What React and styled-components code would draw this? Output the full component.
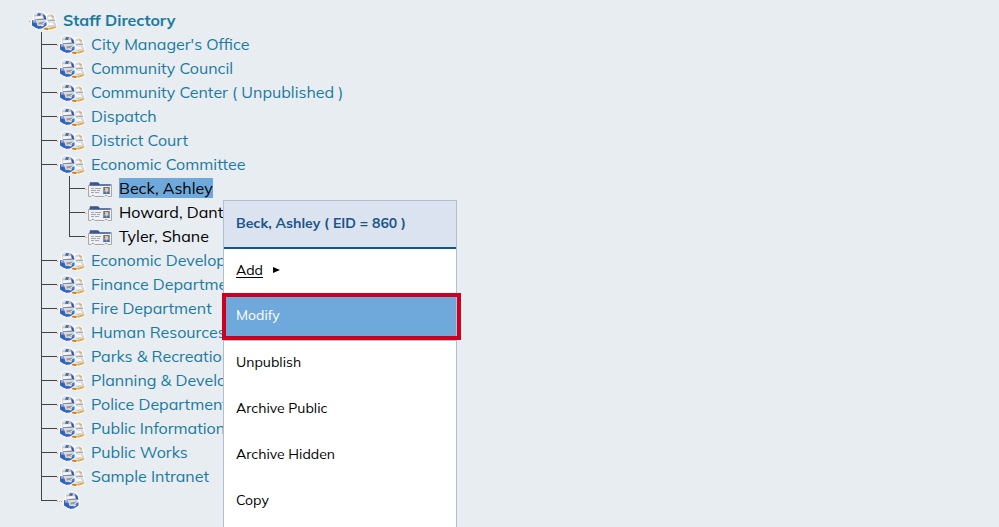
import React, { useState } from 'react'
import styled, { createGlobalStyle } from 'styled-components'

const departments = [
    { name: "City Manager's Office" },
    { name: "Community Council" },
    { name: "Community Center ( Unpublished )" },
    { name: "Dispatch" },
    { name: "District Court" },
    { name: "Economic Committee", staff: ["Beck, Ashley", "Howard, Dante", "Tyler, Shane"] },
    { name: "Economic Development" },
    { name: "Finance Department" },
    { name: "Fire Department" },
    { name: "Human Resources" },
    { name: "Parks & Recreation" },
    { name: "Planning & Development" },
    { name: "Police Department" },
    { name: "Public Information" },
    { name: "Public Works" },
    { name: "Sample Intranet" },
]

const actions = ["Unpublish", "Archive Public", "Archive Hidden", "Copy"]

const BluePerson = () => (
    <g>
        <path d="M4 5 L7 3 L15 4 L18 7 L18.5 12 L19 18 L13 21.5 L8 21.5 L2.5 18 L2 12 L4 10 Z" fill="#fbfcfd" />
        <path d="M5 6 L7 4 L14 5 L16.5 7.5 L16 12 L5.5 12 Z" fill="#bfc4cb" />
        <path d="M6 4.5 L10 4 L9 6 L5.5 7 Z" fill="#e8eaed" />
        <path d="M9 5 L12 5.5 L11 8 L8 7.5 Z" fill="#4569ad" />
        <path d="M14 6 L16.5 8 L17.5 12 L15 11 Z" fill="#2a55b0" />
        <path d="M5.5 8.5 L13.5 8 L14.5 10.5 L6 11 Z" fill="#f6f6f6" />
        <path d="M6 12 L15.5 11" stroke="#7c8693" />
        <path d="M3 12 L7 13 L8 16 L9.5 20.5 L7 20 L3 17.5 Z" fill="#2f62b9" />
        <path d="M3.5 12 L6.5 13 L7 15 L4 14.5 Z" fill="#8fabd9" />
        <path d="M8 17.5 L11 18 L17.5 14 L17.5 17.5 L13 20.5 L9 21 Z" fill="#3768ba" />
        <path d="M7 12.5 L16.5 12 L17 14 L13 16 L13 18 L9 18 Z" fill="#d3d7dc" />
        <path d="M10 14.5 L16 13.5 L13 16 L9 16.5 Z" fill="#9299a3" />
        <path d="M13 17 L15.5 16 L14.5 18 L12.5 18.5 Z" fill="#f2f5f9" />
    </g>
)

const OrangePerson = () => (
    <g>
        <path d="M16 7 L20 5 L25 6.5 L27 10 L27 14 L28.5 17 L27.5 21 L22 22.5 L14.5 22 L13.5 18 L16 14 Z" fill="#fcfcfc" />
        <path d="M17.5 8 L21 6 L25 8 L26 13 L18 13 Z" fill="#d2d4d7" />
        <path d="M22.5 6.5 L25 8.5 L24.5 10 L22 8.5 Z" fill="#ddb069" />
        <path d="M19 9 L22 8.5 L23.5 11 L19 11.5 Z" fill="#f6f6f6" />
        <path d="M17.5 13 L26 12.5" stroke="#9ba0a7" />
        <path d="M16 15 L25.5 13.5 L27.5 17.5 L22 19.5 L15 19 Z" fill="#cdd0d3" />
        <path d="M19 15 L24 14.5 L25 17 L19.5 17.5 Z" fill="#fafafa" />
        <path d="M14.5 19 L20 20 L27.5 18 L27 20 L22 21.5 L15 21.5 Z" fill="#e8a940" />
        <path d="M14.5 20 L19 20.5 L19 22 L14.5 21 Z" fill="#b9703a" />
    </g>
)

const GroupIcon = () => (
    <Icon viewBox="0 0 30 24" aria-hidden="true">
        <rect x="0" y="13" width="1" height="1" fill="#d99a4a" />
        <OrangePerson />
        <BluePerson />
    </Icon>
)

const PersonIcon = () => (
    <Icon viewBox="0 0 30 24" aria-hidden="true">
        <path d="M0 13.5 H7" stroke="#d9ac68" strokeDasharray="1 1" />
        <g transform="translate(4 0)"><BluePerson /></g>
    </Icon>
)

const CardIcon = () => (
    <Icon viewBox="0 0 30 24" aria-hidden="true">
        <rect x="0" y="13" width="2" height="1" fill="#dfb87a" />
        <path d="M4.5 8.5 H26.5 V20.5 H23 L22 19.5 H20 L19 20.5 H10 L9 19.5 H7 L6 20.5 H3.5 V9.5 Z" fill="#eef0f3" stroke="#a5a7ab" />
        <path d="M4 9 L5 6 H13 L15 8 H26 V10 H4 Z" fill="#8a9cbf" />
        <path d="M5 8 V6.5 H13 L15 8.5 H25 V9.5 H5 Z" fill="#3c5789" />
        <path d="M6 12.5 H9 M10 12.5 H16 M6 14.5 H11 M12 14.5 H15 M6 16.5 H9 M10 16.5 H14" stroke="#a2a6ae" />
        <rect x="18" y="11" width="7" height="7" fill="#7d9ac6" />
        <path d="M18 18 L20 15 H23 L25 18 Z" fill="#4e6ea8" />
        <path d="M20 12 H23 V15 L21.5 17 L20 15 Z" fill="#edc494" />
        <path d="M19.5 14 V11.5 H23.5 V13" fill="none" stroke="#8c6a4c" />
    </Icon>
)

const Node = ({ icon, label, last, children, ...rest }) => (
    <Item>
        <Rail $last={last}><Tick /></Rail>
        <div>
            <Row>
                {icon}
                {label && <NodeLink href="#" {...rest}>{label}</NodeLink>}
            </Row>
            {children}
        </div>
    </Item>
)

export default function App() {
    const [selected, setSelected] = useState("Beck, Ashley")

    return (
        <Page>
            <GlobalStyle />
            <Row>
                <GroupIcon />
                <NodeLink href="#" $bold>Staff Directory</NodeLink>
            </Row>
            <Branch>
                {departments.map((dept) => (
                    <Node key={dept.name} icon={<GroupIcon />} label={dept.name}>
                        {dept.staff && (
                            <Branch>
                                {dept.staff.map((person, i) => (
                                    <Node
                                        key={person}
                                        icon={<CardIcon />}
                                        label={person}
                                        last={i === dept.staff.length - 1}
                                        $person
                                        $selected={person === selected}
                                        onClick={() => setSelected(person)}
                                    />
                                ))}
                            </Branch>
                        )}
                    </Node>
                ))}
                <Node icon={<PersonIcon />} last />
            </Branch>

            <Menu>
                <MenuTitle>{selected} ( EID = 860 )</MenuTitle>
                <MenuItem>
                    <u>Add</u>
                    <Arrow viewBox="0 0 8 6" aria-hidden="true"><path d="M1 0 L8 3 L1 6 Z" /></Arrow>
                </MenuItem>
                <MenuItem $active>
                    Modify
                    <Outline />
                </MenuItem>
                <MenuGroup>
                    {actions.map((action) => (
                        <MenuItem key={action}>{action}</MenuItem>
                    ))}
                </MenuGroup>
            </Menu>
        </Page>
    )
}

const GlobalStyle = createGlobalStyle`
body {
    margin: 0;
    background: #e8edf1;
}
* {
    box-sizing: border-box;
}
`

const Page = styled.main`
position: relative;
min-height: 100vh;
overflow: hidden;
padding: 8px 0 0 29px;
font-family: "Mulish", "Muli", "Lato", sans-serif;
font-size: 16px;
line-height: 20px;
color: #000;
`

const Icon = styled.svg`
width: 30px;
height: 24px;
flex: none;
`

const Row = styled.div`
display: flex;
align-items: center;
gap: 4px;
height: 24px;
`

const Branch = styled.ul`
list-style: none;
margin: 0 0 0 12px;
padding: 0;
`

const Item = styled.li`
display: flex;
`

const Rail = styled.div`
width: 16px;
flex: none;
border-left: 1px solid #444;
height: ${(props) => props.$last ? "13px" : "auto"};
`

const Tick = styled.div`
height: 1px;
margin-top: 12px;
background: #444;
`

const NodeLink = styled.a`
white-space: nowrap;
text-decoration: none;
font-weight: ${(props) => props.$bold ? 700 : 400};
color: ${(props) => props.$person ? "#000" : "#1b7a9f"};
background: ${(props) => props.$selected ? "#6fa8da" : "none"};
`

const Menu = styled.div`
position: absolute;
top: 200px;
left: 223px;
width: 234px;
padding-bottom: 24px;
background: #fff;
border: 1px solid #b0bfd2;
font-size: 14px;
`

const MenuTitle = styled.div`
height: 48px;
padding: 12px;
background: #dae3ef;
border-bottom: 2px solid #0f568a;
color: #1a5588;
font-weight: 700;
`

const MenuItem = styled.button`
position: relative;
display: flex;
align-items: center;
gap: 9px;
width: 100%;
height: 45px;
padding: 0 12px 3px;
border: none;
background: ${(props) => props.$active ? "#6fa8da" : "#fff"};
color: ${(props) => props.$active ? "#fff" : "#000"};
font: inherit;
text-align: left;
cursor: pointer;
u {
    text-underline-offset: 2px;
}
`

const MenuGroup = styled.div`
display: grid;
gap: 1px;
margin-top: 1px;
border-top: 1px solid #b0bfd2;
`

const Arrow = styled.svg`
width: 8px;
height: 6px;
`

const Outline = styled.span`
position: absolute;
inset: -1px -5px -1px -2px;
border: 4px solid #cd0020;
z-index: 1;
pointer-events: none;
`
